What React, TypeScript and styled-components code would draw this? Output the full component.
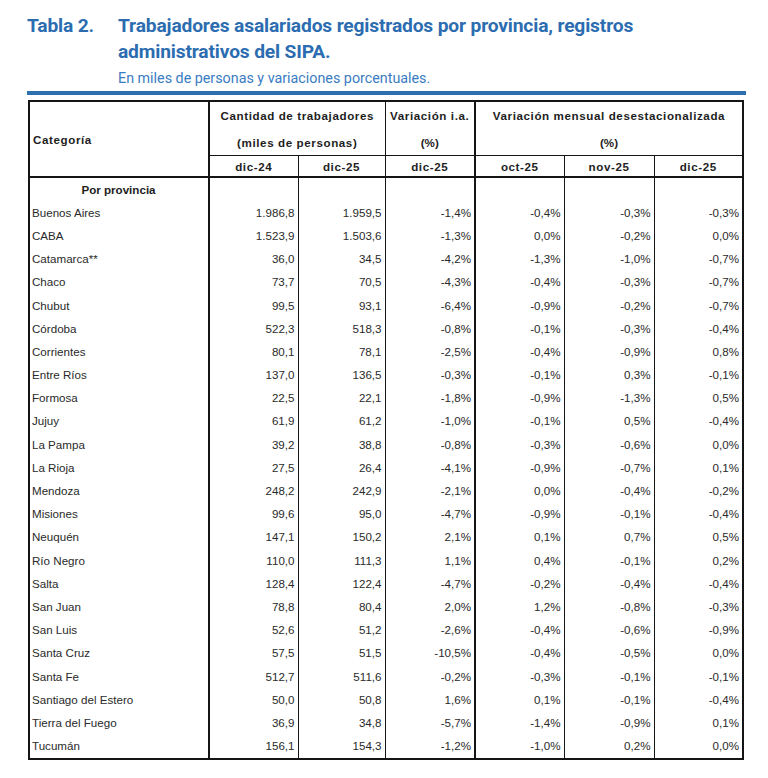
import React from "react";
import styled, { createGlobalStyle } from "styled-components";

const Global = createGlobalStyle`
  html, body { margin: 0; padding: 0; background: #ffffff; }
  body { font-family: "Liberation Sans", Arial, sans-serif; }
`;

const Page = styled.div`
  width: 768px;
  min-height: 778px;
  box-sizing: border-box;
  padding: 13px 0 0 27px;
  background: #fff;
`;

const TitleBlock = styled.header`
  display: grid;
  grid-template-columns: 91px 1fr;
  font-family: Roboto, "Noto Sans", sans-serif;
  color: #2c6cb0;
`;

const TitleLabel = styled.div`
  font-size: 19.2px;
  font-weight: 700;
  line-height: 26px;
  letter-spacing: -0.15px;
`;

const TitleText = styled.h1`
  margin: 0;
  font-size: 19.2px;
  font-weight: 700;
  line-height: 26px;
  letter-spacing: -0.15px;
`;

const Subtitle = styled.div`
  grid-column: 2;
  margin-top: 5px;
  font-size: 14.3px;
  line-height: 17px;
  color: #3a7cc2;
  font-weight: 400;
`;

const Bar = styled.div`
  margin-top: 4px;
  width: 719px;
  height: 4px;
  background: #2e6fb0;
`;

const Table = styled.table`
  margin: 5px 0 0 1px;
  width: 714px;
  table-layout: fixed;
  border-collapse: collapse;
  border: 2px solid #151515;
  font-family: "Liberation Sans", Arial, sans-serif;
  font-size: 11.6px;
  color: #2a2a2a;
`;

type Edge = "thick" | "thin" | "none";
const edgeWidth = (e?: Edge) => (e === "thick" ? "2px" : e === "thin" ? "1px" : "0");

const HeadCell = styled.th<{ $right?: Edge; $bottom?: Edge; $align?: string; $h: number; $spaced?: boolean }>`
  height: ${(p) => p.$h}px;
  padding: 0 3px;
  font-weight: 700;
  color: #1e1e1e;
  letter-spacing: ${(p) => (p.$spaced ? "0.6px" : "0")};
  text-align: ${(p) => p.$align || "center"};
  vertical-align: middle;
  border-right: ${(p) => edgeWidth(p.$right)} solid #151515;
  border-bottom: ${(p) => edgeWidth(p.$bottom)} solid #151515;
  white-space: nowrap;
`;

const Cell = styled.td<{ $right?: Edge; $align?: string; $bold?: boolean }>`
  height: 23.2px;
  padding: 0 3px 0 2px;
  line-height: 14px;
  text-align: ${(p) => p.$align || "right"};
  font-weight: ${(p) => (p.$bold ? 700 : 400)};
  color: ${(p) => (p.$bold ? "#1e1e1e" : "#2a2a2a")};
  vertical-align: middle;
  border-right: ${(p) => edgeWidth(p.$right)} solid #151515;
  white-space: nowrap;
`;

const rows: string[][] = [
  ["Buenos Aires", "1.986,8", "1.959,5", "-1,4%", "-0,4%", "-0,3%", "-0,3%"],
  ["CABA", "1.523,9", "1.503,6", "-1,3%", "0,0%", "-0,2%", "0,0%"],
  ["Catamarca**", "36,0", "34,5", "-4,2%", "-1,3%", "-1,0%", "-0,7%"],
  ["Chaco", "73,7", "70,5", "-4,3%", "-0,4%", "-0,3%", "-0,7%"],
  ["Chubut", "99,5", "93,1", "-6,4%", "-0,9%", "-0,2%", "-0,7%"],
  ["Córdoba", "522,3", "518,3", "-0,8%", "-0,1%", "-0,3%", "-0,4%"],
  ["Corrientes", "80,1", "78,1", "-2,5%", "-0,4%", "-0,9%", "0,8%"],
  ["Entre Ríos", "137,0", "136,5", "-0,3%", "-0,1%", "0,3%", "-0,1%"],
  ["Formosa", "22,5", "22,1", "-1,8%", "-0,9%", "-1,3%", "0,5%"],
  ["Jujuy", "61,9", "61,2", "-1,0%", "-0,1%", "0,5%", "-0,4%"],
  ["La Pampa", "39,2", "38,8", "-0,8%", "-0,3%", "-0,6%", "0,0%"],
  ["La Rioja", "27,5", "26,4", "-4,1%", "-0,9%", "-0,7%", "0,1%"],
  ["Mendoza", "248,2", "242,9", "-2,1%", "0,0%", "-0,4%", "-0,2%"],
  ["Misiones", "99,6", "95,0", "-4,7%", "-0,9%", "-0,1%", "-0,4%"],
  ["Neuquén", "147,1", "150,2", "2,1%", "0,1%", "0,7%", "0,5%"],
  ["Río Negro", "110,0", "111,3", "1,1%", "0,4%", "-0,1%", "0,2%"],
  ["Salta", "128,4", "122,4", "-4,7%", "-0,2%", "-0,4%", "-0,4%"],
  ["San Juan", "78,8", "80,4", "2,0%", "1,2%", "-0,8%", "-0,3%"],
  ["San Luis", "52,6", "51,2", "-2,6%", "-0,4%", "-0,6%", "-0,9%"],
  ["Santa Cruz", "57,5", "51,5", "-10,5%", "-0,4%", "-0,5%", "0,0%"],
  ["Santa Fe", "512,7", "511,6", "-0,2%", "-0,3%", "-0,1%", "-0,1%"],
  ["Santiago del Estero", "50,0", "50,8", "1,6%", "0,1%", "-0,1%", "-0,4%"],
  ["Tierra del Fuego", "36,9", "34,8", "-5,7%", "-1,4%", "-0,9%", "0,1%"],
  ["Tucumán", "156,1", "154,3", "-1,2%", "-1,0%", "0,2%", "0,0%"],
];

const colEdges: Edge[] = ["thick", "thin", "thin", "thick", "thin", "thin", "none"];
const colWidths = [180, 89, 87, 90, 89, 90, 89];

export default function App() {
  return (
    <>
      <Global />
      <Page>
        <TitleBlock>
          <TitleLabel>Tabla 2.</TitleLabel>
          <TitleText>
            Trabajadores asalariados registrados por provincia, registros
            <br />
            administrativos del SIPA.
          </TitleText>
          <Subtitle>En miles de personas y variaciones porcentuales.</Subtitle>
        </TitleBlock>
        <Bar />
        <Table>
          <colgroup>
            {colWidths.map((w, i) => (
              <col key={i} style={{ width: w }} />
            ))}
          </colgroup>
          <thead>
            <tr>
              <HeadCell rowSpan={3} $h={27} $align="left" $right="thick" $bottom="thick" $spaced>
                Categoría
              </HeadCell>
              <HeadCell colSpan={2} $h={27} $right="thin" $spaced>
                Cantidad de trabajadores
              </HeadCell>
              <HeadCell $h={27} $right="thick" $spaced>
                Variación i.a.
              </HeadCell>
              <HeadCell colSpan={3} $h={27} $spaced>
                Variación mensual desestacionalizada
              </HeadCell>
            </tr>
            <tr>
              <HeadCell colSpan={2} $h={26} $right="thin" $bottom="thin" $spaced>
                (miles de personas)
              </HeadCell>
              <HeadCell $h={26} $right="thick" $bottom="thin">
                (%)
              </HeadCell>
              <HeadCell colSpan={3} $h={26} $bottom="thin">
                (%)
              </HeadCell>
            </tr>
            <tr>
              {["dic-24", "dic-25", "dic-25", "oct-25", "nov-25", "dic-25"].map((t, i) => (
                <HeadCell key={i} $h={20} $right={colEdges[i + 1]} $bottom="thick" $spaced>
                  {t}
                </HeadCell>
              ))}
            </tr>
          </thead>
          <tbody>
            <tr>
              <Cell $align="center" $bold $right="thick">
                Por provincia
              </Cell>
              {colEdges.slice(1).map((e, i) => (
                <Cell key={i} $right={e} />
              ))}
            </tr>
            {rows.map((r) => (
              <tr key={r[0]}>
                {r.map((v, i) => (
                  <Cell key={i} $align={i === 0 ? "left" : "right"} $right={colEdges[i]}>
                    {v}
                  </Cell>
                ))}
              </tr>
            ))}
          </tbody>
        </Table>
      </Page>
    </>
  );
}
